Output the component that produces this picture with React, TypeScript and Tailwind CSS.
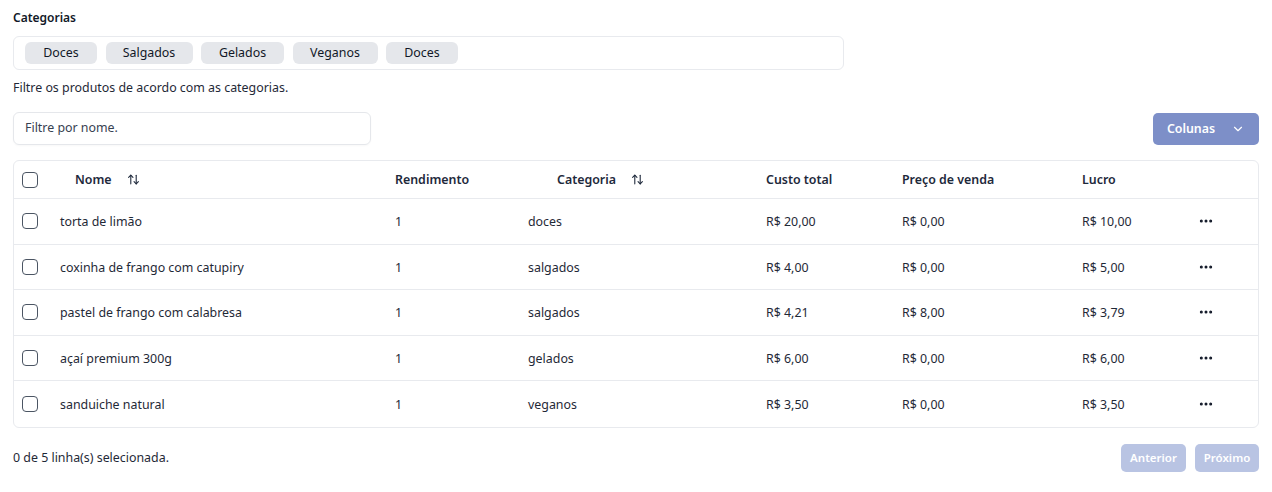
import React from "react";
import { ChevronDown, ArrowUpDown, MoreHorizontal } from "lucide-react";

const cats: [string, string][] = [
  ["Doces", "w-[72px]"],
  ["Salgados", "w-[87px]"],
  ["Gelados", "w-[83px]"],
  ["Veganos", "w-[85px]"],
  ["Doces", "w-[72px]"],
];

const rows = [
  ["torta de limão", "1", "doces", "R$ 20,00", "R$ 0,00", "R$ 10,00"],
  ["coxinha de frango com catupiry", "1", "salgados", "R$ 4,00", "R$ 0,00", "R$ 5,00"],
  ["pastel de frango com calabresa", "1", "salgados", "R$ 4,21", "R$ 8,00", "R$ 3,79"],
  ["açaí premium 300g", "1", "gelados", "R$ 6,00", "R$ 0,00", "R$ 6,00"],
  ["sanduiche natural", "1", "veganos", "R$ 3,50", "R$ 0,00", "R$ 3,50"],
];

const grid = "grid grid-cols-[46px_335px_133px_238px_136px_180px_113px_1fr] items-center";

function Box() {
  return <div className="w-[16px] h-[16px] rounded-[4px] border-[1.5px] border-[#4b5563] bg-white" />;
}

export default function App() {
  return (
    <div className="w-[1272px] h-[492px] bg-white px-[13px] pt-[10px] text-[12.4px] text-[#1f2937]" style={{ fontFamily: '"Noto Sans", sans-serif' }}>
      <div className="font-semibold text-[12px] leading-[16px] text-[#111827]">Categorias</div>
      <div className="mt-[10px] w-[831px] h-[34px] border border-[#e8eaee] rounded-[6px] flex items-center gap-[8.5px] px-[11px]">
        {cats.map(([c, w], i) => (
          <div key={i} className={`${w} h-[22px] rounded-[6px] bg-[#e5e7eb] flex items-center justify-center text-[12.4px] text-[#111827]`}>{c}</div>
        ))}
      </div>
      <div className="mt-[9px] leading-[18px] text-[#1f2937]">Filtre os produtos de acordo com as categorias.</div>
      <div className="mt-[15px] flex items-center justify-between">
        <div className="w-[358px] h-[33px] border border-[#e5e7eb] rounded-[6px] flex items-center px-[11px] text-[#374151] shadow-[0_1px_2px_rgba(0,0,0,0.03)]">Filtre por nome.</div>
        <div className="w-[106px] h-[32px] pt-[1px] rounded-[5px] bg-[#7d8fc8] text-white font-semibold flex items-center justify-center gap-[16px]">
          <span>Colunas</span>
          <ChevronDown size={14} strokeWidth={2} />
        </div>
      </div>
      <div className="mt-[15px] w-[1246px] border border-[#e8eaee] rounded-[6px]">
        <div className={`${grid} h-[38px] pt-[1px] border-b border-[#e8eaee] font-semibold text-[#1e293b]`}>
          <div className="pl-[8px]"><Box /></div>
          <div className="pl-[15px] flex items-center gap-[15px]">Nome <ArrowUpDown size={13} strokeWidth={2} /></div>
          <div>Rendimento</div>
          <div className="pl-[29px] flex items-center gap-[15px]">Categoria <ArrowUpDown size={13} strokeWidth={2} /></div>
          <div>Custo total</div>
          <div>Preço de venda</div>
          <div>Lucro</div>
          <div />
        </div>
        {rows.map((r, i) => (
          <div key={i} className={`${grid} h-[45.6px] ${i < rows.length - 1 ? "border-b border-[#e8eaee]" : ""}`}>
            <div className="pl-[8px]"><Box /></div>
            {r.map((v, j) => <div key={j} className="pt-[2px]">{v}</div>)}
            <div className="pl-[3px]"><MoreHorizontal size={16} strokeWidth={2.5} className="text-[#111827]" /></div>
          </div>
        ))}
      </div>
      <div className="mt-[16px] flex items-center justify-between">
        <div className="text-[#1f2937] pt-[1px]">0 de 5 linha(s) selecionada.</div>
        <div className="flex gap-[9px]">
          <div className="w-[65px] h-[28px] rounded-[5px] bg-[#b9c4e3] text-white font-semibold text-[11.5px] flex items-center justify-center">Anterior</div>
          <div className="w-[64px] h-[28px] rounded-[5px] bg-[#b9c4e3] text-white font-semibold text-[11.5px] flex items-center justify-center">Próximo</div>
        </div>
      </div>
    </div>
  );
}
